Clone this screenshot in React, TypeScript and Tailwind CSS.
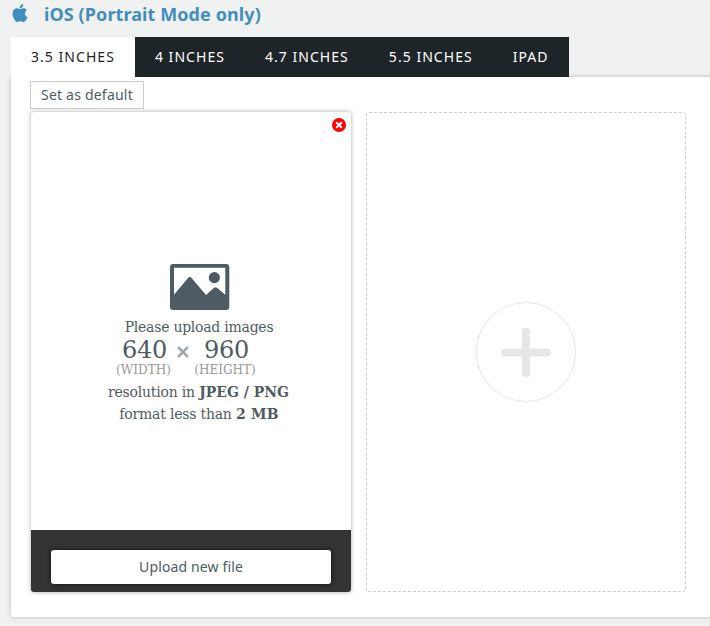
import { useState } from "react";
import { IoLogoApple } from "react-icons/io";

const sizes: string[] = ["3.5 inches", "4 inches", "4.7 inches", "5.5 inches", "iPad"]

function ImageIcon(){
    return(
        <svg width="60" height="46" viewBox="0 0 60 46" className="block ml-px" fill="#4f5b62">
            <path fillRule="evenodd" d="M3 0H56Q59.3 0 59.3 3V43Q59.3 46 56 46H3Q0 46 0 43V3Q0 0 3 0ZM4 3.8V30.7L18.2 13.8Q19.8 12.4 21.4 13.8L36 31L44 23.8Q45.5 22.7 47 23.8L55.3 30.7V3.8Z"/>
            <circle cx="44.4" cy="13.6" r="5.6"/>
        </svg>
    )
}

function CloseIcon(){
    return(
        <svg width="14" height="14" viewBox="0 0 14 14" className="block">
            <circle cx="7" cy="7" r="7" fill="#ff0000"/>
            <path d="M4.2 4.2L9.8 9.8M9.8 4.2L4.2 9.8" stroke="#fff" strokeWidth="2.1"/>
        </svg>
    )
}

function UploadCard(){
    return(
        <div className="relative w-[320px] h-[480px] flex flex-col rounded-[3px] bg-white shadow-[0_0_4px_rgba(0,0,0,0.35)]">
            <button className="absolute top-[6px] right-[5px]">
                <CloseIcon/>
            </button>
            <div className="flex-grow flex flex-col items-center pt-[152px] pl-4 text-[14px] leading-[22px] font-['DejaVu_Serif',serif] text-[#4f5b62]">
                <ImageIcon/>
                <div className="mt-[6px] tracking-[-0.25px]">Please upload images</div>
                <div className="flex items-start mr-[26px] -mt-px">
                    <div className="w-[58px] flex flex-col items-center">
                        <span className="pl-[3px] text-[24px] leading-[26px] tracking-[-0.3px]">640</span>
                        <span className="pl-px text-[12px] leading-[14px] tracking-[0.08px] text-[#999]">(WIDTH)</span>
                    </div>
                    <svg width="12" height="12" viewBox="0 0 12 12" className="mt-[9px] mx-[5px]">
                        <path d="M1 1L11 11M11 1L1 11" stroke="#a0a9b0" strokeWidth="2.5"/>
                    </svg>
                    <div className="w-[64px] flex flex-col items-center">
                        <span className="pl-px text-[24px] leading-[26px] tracking-[-0.3px]">960</span>
                        <span className="-ml-[2px] text-[12px] leading-[14px] text-[#999]">(HEIGHT)</span>
                    </div>
                </div>
                <div className="mt-1 -ml-px tracking-[-0.2px]">resolution in <b className="tracking-[0px]">JPEG / PNG</b></div>
                <div className="tracking-[-0.2px]">format less than <b className="tracking-[0.2px]">2 MB</b></div>
            </div>
            <div className="h-[62px] px-5 pt-5 bg-[#333] rounded-b-[3px]">
                <button className="block w-full h-[34px] pb-[2px] bg-white rounded-[3px] text-[14px] tracking-[0.13px] text-[#4f5b62] shadow-[0_0_5px_rgba(0,0,0,0.7)]">Upload new file</button>
            </div>
        </div>
    )
}

function AddCard(){
    return(
        <div className="w-[320px] h-[480px] flex items-center justify-center border border-dashed border-[#ccc] rounded-[3px]">
            <button className="w-[100px] h-[100px] flex items-center justify-center rounded-full border border-[#e6e6e6]">
                <svg width="50" height="50" viewBox="0 0 50 50">
                    <path d="M4.3 25.5H45.7M25 4.8V46.2" stroke="#e6e6e6" strokeWidth="8.2" strokeLinecap="round"/>
                </svg>
            </button>
        </div>
    )
}

export default function App(){
    const [selected, setSelected] = useState<number>(0)

    return(
        <div className="w-full h-screen overflow-hidden bg-[#f0f2f1] pl-[11px] font-['Noto_Sans',sans-serif]">
            <div className="h-[37px] flex items-start text-[#438ebf]">
                <IoLogoApple size={24} className="-ml-[3px] mt-px"/>
                <h2 className="ml-3 text-[18px] leading-[28px] tracking-[0.09px] font-bold">iOS (Portrait Mode only)</h2>
            </div>
            <div className="flex h-10">
                {sizes.map((size, i) =>(
                    <button key={size} onClick={() => setSelected(i)}
                        className={`h-10 px-5 pb-[2px] text-[14px] tracking-[1.04px] uppercase ${i === selected ? 'bg-white text-[#1d2528]' : 'bg-[#1d2528] text-white'}`}>
                        {size}
                    </button>
                ))}
            </div>
            <div className="h-[540px] -mr-4 pl-5 pt-1 bg-white rounded-b-[2px] shadow-[0_0_4px_rgba(0,0,0,0.25)]">
                <button className="block -ml-px h-7 px-[10px] border border-[#ccc] text-[14px] leading-[26px] tracking-[0.21px] text-[#4f5b62]">Set as default</button>
                <div className="flex gap-[15px] mt-[3px]">
                    <UploadCard/>
                    <AddCard/>
                </div>
            </div>
        </div>
    );
}
